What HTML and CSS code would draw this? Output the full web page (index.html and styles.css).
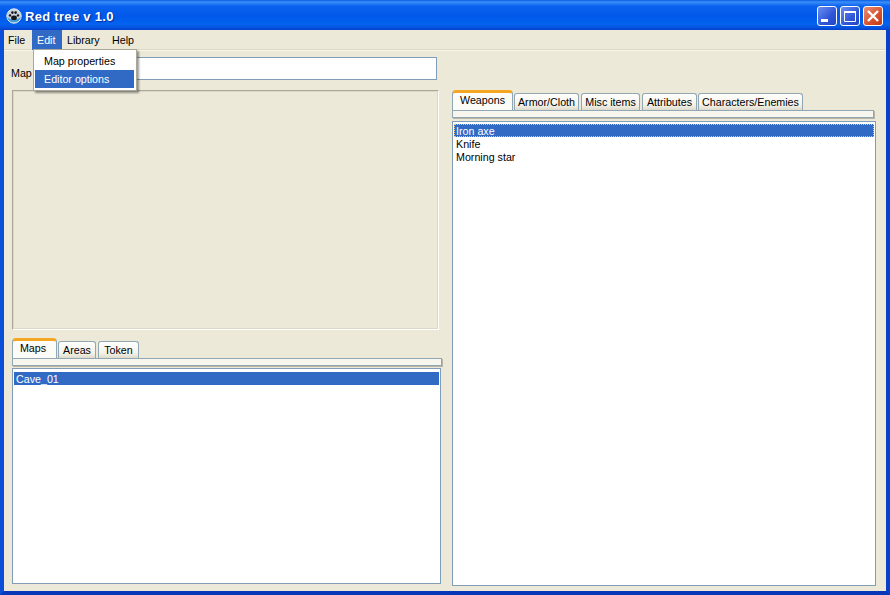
FILE: index.html
```html
<!DOCTYPE html>
<html lang="en">
<head>
    <meta charset="UTF-8">
    <title>Red tree v 1.0</title>
    <link rel="stylesheet" href="styles.css">
</head>
<body>
    <div class="window">
        <div class="titlebar">
            <svg class="app-icon" width="18" height="18" viewBox="0 0 18 18">
                <circle cx="9" cy="9" r="7.2" fill="#c9d2da" stroke="#e4e9ee" stroke-width="1"/>
                <path d="M2.2 10 A7 7 0 0 0 15.8 10 L13 12 L5 12 Z" fill="#3f9bd8"/>
                <ellipse cx="9" cy="10.8" rx="2.9" ry="2.3" fill="#14181c"/>
                <circle cx="5" cy="8.4" r="1.2" fill="#14181c"/>
                <circle cx="7.4" cy="5.6" r="1.3" fill="#14181c"/>
                <circle cx="10.6" cy="5.6" r="1.3" fill="#14181c"/>
                <circle cx="13" cy="8.4" r="1.2" fill="#14181c"/>
            </svg>
            <span class="title">Red tree v 1.0</span>
            <div class="win-buttons">
                <div class="win-btn">
                    <svg width="20" height="20" viewBox="0 0 20 20"><rect x="4" y="13" width="7" height="3" fill="#fff"/></svg>
                </div>
                <div class="win-btn">
                    <svg width="20" height="20" viewBox="0 0 20 20"><path d="M4.5 5.5h11v10h-11z" fill="none" stroke="#fff"/><rect x="4" y="5" width="12" height="2" fill="#fff"/></svg>
                </div>
                <div class="win-btn close">
                    <svg width="20" height="20" viewBox="0 0 20 20"><path d="M5 5l10 10M15 5L5 15" stroke="#fff" stroke-width="2.4"/></svg>
                </div>
            </div>
        </div>

        <div class="menubar">
            <div class="menu-item m-file">File</div>
            <div class="menu-item m-edit active">Edit</div>
            <div class="menu-item m-library">Library</div>
            <div class="menu-item m-help">Help</div>
        </div>

        <div class="dropdown">
            <div class="dropdown-item">Map properties</div>
            <div class="dropdown-item selected">Editor options</div>
        </div>

        <div class="client">
            <div class="left-col">
                <div class="map-row">
                    <label class="map-label" for="mapName">Map</label>
                    <input class="map-input" type="text" id="mapName">
                </div>
                <div class="map-panel"></div>
                <div class="tabs tabs-left">
                    <div class="tab active t-maps">Maps</div>
                    <div class="tab t-areas">Areas</div>
                    <div class="tab t-token">Token</div>
                </div>
                <div class="tab-strip"></div>
                <div class="list list-left">
                    <div class="row selected">Cave_01</div>
                </div>
            </div>

            <div class="right-col">
                <div class="tabs">
                    <div class="tab active t-weapons">Weapons</div>
                    <div class="tab t-armor">Armor/Cloth</div>
                    <div class="tab t-misc">Misc items</div>
                    <div class="tab t-attr">Attributes</div>
                    <div class="tab t-chars">Characters/Enemies</div>
                </div>
                <div class="tab-strip strip-right"></div>
                <div class="list list-right">
                    <div class="row selected focused">Iron axe</div>
                    <div class="row">Knife</div>
                    <div class="row">Morning star</div>
                </div>
            </div>
        </div>
    </div>
</body>
</html>
```

FILE: styles.css
```css
* {
    margin: 0;
    padding: 0;
    box-sizing: border-box;
}

html, body {
    height: 100%;
    overflow: hidden;
}

body {
    font-family: "Liberation Sans", sans-serif;
    font-size: 10.7px;
    color: #000;
}

.window {
    position: relative;
    display: flex;
    flex-direction: column;
    height: 595px;
    background: #ece9d8;
    border-left: 4px solid #0a4fd8;
    border-right: 4px solid #0a3fc8;
    border-bottom: 4px solid #0838b8;
}

.titlebar {
    display: flex;
    align-items: center;
    height: 30px;
    margin: 0 -4px;
    padding: 2px 7px 0 5px;
    background: linear-gradient(#0a5be0 0, #3b8ffa 2px, #0a62ee 6px, #0158ea 16px, #0264f0 24px, #0550dc 28px, #0340c8 30px);
}

.app-icon {
    margin-right: 2px;
}

.title {
    flex: 1;
    font-size: 13px;
    font-weight: bold;
    letter-spacing: 0.3px;
    color: #fff;
    text-shadow: 1px 1px 1px #0a2a90;
}

.win-buttons {
    display: flex;
    gap: 3px;
}

.win-btn {
    width: 20px;
    height: 20px;
    border: 1px solid #fff;
    border-radius: 3px;
    background: linear-gradient(135deg, #6b8ff0, #2f55d8 60%, #2346c4);
    overflow: hidden;
}

.win-btn svg {
    display: block;
    margin: -1px;
}

.win-btn.close {
    background: linear-gradient(135deg, #e8907a, #d8502c 60%, #c03a18);
}

.menubar {
    display: flex;
    height: 21px;
    border-bottom: 1px solid #f8f6ee;
    box-shadow: inset 0 -1px 0 #dcd8c4;
}

.menu-item {
    height: 20px;
    padding-left: 5px;
    line-height: 20px;
}

.m-file { width: 28px; padding-left: 4px; }
.m-edit { width: 30px; }
.m-library { width: 45px; }
.m-help { width: 30px; }

.menu-item.active {
    background: #316ac5;
    color: #fff;
}

.dropdown {
    position: absolute;
    left: 29px;
    top: 49px;
    width: 104px;
    height: 42px;
    padding: 2px 2px 2px 1px;
    background: #fff;
    border: 1px solid #aca899;
    box-shadow: 2px 2px 2px rgba(0,0,0,0.4);
    z-index: 5;
}

.dropdown-item {
    height: 18px;
    padding-left: 9px;
    line-height: 18px;
}

.dropdown-item.selected {
    background: #316ac5;
    color: #fff;
}

.client {
    flex: 1;
    display: grid;
    grid-template-columns: 430px 424px;
    gap: 10px;
    padding: 6px 10px 0 8px;
    min-height: 0;
}

.left-col, .right-col {
    display: flex;
    flex-direction: column;
    min-height: 0;
}

.right-col {
    padding-top: 33px;
}

.map-row {
    display: flex;
    align-items: center;
    height: 23px;
    padding-right: 5px;
}

.map-label {
    width: 24px;
    padding-top: 9px;
    margin-left: -1px;
}

.map-input {
    flex: 1;
    height: 23px;
    border: 1px solid #7f9db9;
    background: #fff;
}

.map-panel {
    width: 427px;
    height: 240px;
    margin-top: 10px;
    border: 1px solid;
    border-color: #aca899 #fff #fff #aca899;
    outline: 1px solid rgba(172,168,153,0.25);
    outline-offset: -2px;
}

.tabs {
    display: flex;
    align-items: flex-end;
    gap: 1px;
    height: 20px;
}

.tabs-left {
    margin-top: 8px;
}

.tab {
    height: 17px;
    line-height: 16px;
    text-align: center;
    background: linear-gradient(#fff, #f3f1e8 70%, #dedbcc);
    border: 1px solid #91a7b4;
    border-bottom: none;
    border-radius: 3px 3px 0 0;
}

.tab.active {
    height: 20px;
    line-height: 15px;
    background: #fbfbf8;
    border-color: #91a7b4;
    border-top: 3px solid #f5a623;
    border-radius: 4px 4px 0 0;
}

.t-maps { width: 45px; padding-right: 3px; }
.t-areas { width: 38px; }
.t-token { width: 41px; margin-left: 1px; }
.t-weapons { width: 61px; }
.t-armor { width: 65px; }
.t-misc { width: 59px; margin-left: 1px; }
.t-attr { width: 55px; margin-left: 1px; }
.t-chars { width: 105px; }

.tab-strip {
    height: 8px;
    background: #f6f5ee;
    border: 1px solid #91a7b4;
    box-shadow: 1px 1px 0 #b8b4a4;
}

.strip-right {
    width: 422px;
}

.list {
    flex: 1;
    min-height: 0;
    padding: 2px 1px;
    background: #fff;
    border: 1px solid #7f9db9;
    overflow: hidden;
}

.list-left {
    width: 429px;
    margin-top: 2px;
    margin-bottom: 7px;
    padding-top: 3px;
}

.list-right {
    margin-top: 3px;
    margin-bottom: 5px;
}

.row {
    height: 13px;
    padding-left: 2px;
    line-height: 14px;
}

.row.selected {
    background: #316ac5;
    color: #fff;
}

.row.focused {
    outline: 1px dotted #e8c878;
    outline-offset: -1px;
}
```
